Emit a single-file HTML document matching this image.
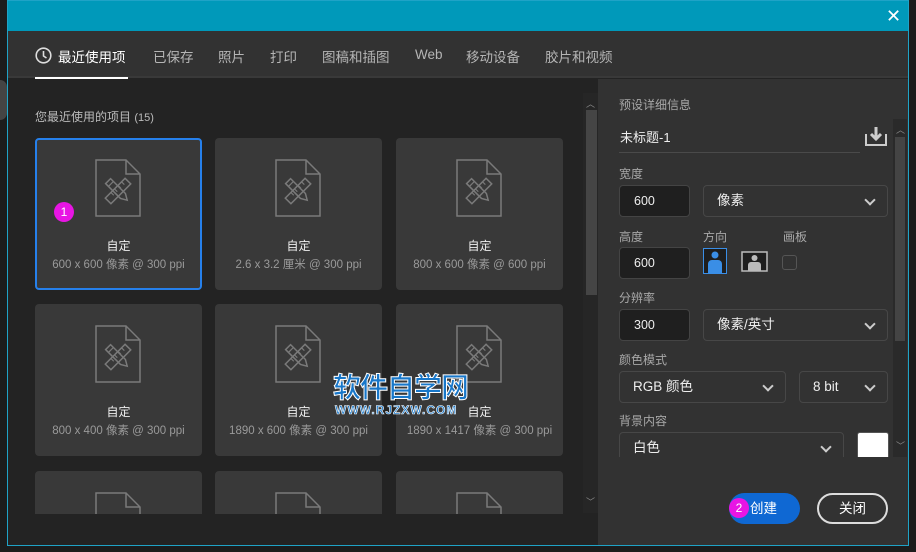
<!DOCTYPE html>
<html><head><meta charset="utf-8"><style>
*{margin:0;padding:0;box-sizing:border-box}
html,body{width:916px;height:552px;overflow:hidden}
body{background:#1c1c1c;position:relative;font-family:"Liberation Sans","Noto Sans CJK SC",sans-serif;color:#ddd}
.a{position:absolute}
.dlg{left:7px;top:0;width:902px;height:546px;border:1px solid #1fa3c7;background:#232323;overflow:hidden}
.card{position:absolute;width:167px;height:152px;background:#393939;border-radius:4px;text-align:center}
.card svg{position:absolute;left:60px;top:21px}
.card .t{position:absolute;top:99px;width:100%;font-size:12px;color:#eee}
.card .s{position:absolute;top:118px;width:100%;font-size:11.5px;color:#9a9a9a}
.lbl{position:absolute;font-size:12px;color:#a8a8a8}
.inp{position:absolute;background:#1f1f1f;border:1px solid #444;border-radius:4px;font-size:12.5px;color:#eee;padding-left:14px;line-height:30px;height:32px}
.dd{position:absolute;border:1px solid #474747;border-radius:4px;font-size:13.5px;color:#eee;padding-left:13px;line-height:30px;height:32px}
.dd:after{content:"";position:absolute;right:13px;top:10px;width:6px;height:6px;border-right:2px solid #ccc;border-bottom:2px solid #ccc;transform:rotate(45deg)}
.tab{position:absolute;top:45px;font-size:13.5px;color:#b5b5b5}
</style></head><body>
<svg width="0" height="0" style="position:absolute"><defs>
<g id="doc"><path d="M1 1h30l14 14v42H1z M31 1v14h14" fill="none" stroke="#7a7a7a" stroke-width="1.5"/></g>
<g id="tool"><g transform="rotate(45 23 32)"><rect x="19" y="18" width="8" height="28" fill="none" stroke="#7a7a7a" stroke-width="1.5"/><path d="M19 23h4M19 28h4M19 33h4M19 38h4" stroke="#7a7a7a" stroke-width="1.2"/></g><g transform="rotate(-45 23 32)"><path d="M19.5 18h7v21l-3.5 6-3.5-6z" fill="none" stroke="#7a7a7a" stroke-width="1.5"/><path d="M19.5 22h7" stroke="#7a7a7a" stroke-width="1.2"/></g></g>
</defs></svg>
<div class="a" style="left:0;top:80px;width:7px;height:40px;background:#444;border-radius:0 20px 20px 0"></div>
<div class="a dlg">
 <div class="a" style="left:0;top:0;width:900px;height:30px;background:#0099ba"></div>
 <div class="a" style="left:878px;top:6px;font-size:18px;color:#fff;line-height:18px">✕</div>
 <div class="a" style="left:0;top:30px;width:900px;height:47px;background:#323232;border-bottom:2px solid #393939"></div>
 <div class="a" style="left:27px;top:76px;width:93px;height:2px;background:#fff"></div>
 <svg class="a" style="left:27px;top:46px" width="17" height="17" viewBox="0 0 17 17"><circle cx="8.5" cy="8.5" r="7.3" fill="none" stroke="#ddd" stroke-width="1.6"/><path d="M8.5 4v5l3 2" fill="none" stroke="#ddd" stroke-width="1.6"/></svg>
 <div class="tab" style="left:50px;color:#fff">最近使用项</div>
 <div class="tab" style="left:145px">已保存</div>
 <div class="tab" style="left:210px">照片</div>
 <div class="tab" style="left:262px">打印</div>
 <div class="tab" style="left:314px">图稿和插图</div>
 <div class="tab" style="left:407px;top:46px">Web</div>
 <div class="tab" style="left:458px">移动设备</div>
 <div class="tab" style="left:537px">胶片和视频</div>
 <div class="lbl" style="left:27px;top:107px;color:#bbb">您最近使用的项目 <span style="font-size:11px">(15)</span></div>
 <div class="a" style="left:0;top:78px;width:575px;height:435px;overflow:hidden">
  <div class="card" style="left:27px;top:59px;border:2px solid #2680eb"><svg width="46" height="58" viewBox="0 0 46 58" style="left:58px;top:19px"><use href="#doc"/><use href="#tool"/></svg><div class="a" style="left:17px;top:62px;width:20px;height:20px;border-radius:50%;background:#e815e4;color:#fff;font-size:12px;line-height:20px">1</div><div class="t" style="top:97px">自定</div><div class="s" style="top:116px">600 x 600 像素 @ 300 ppi</div></div>
  <div class="card" style="left:207px;top:59px"><svg width="46" height="58" viewBox="0 0 46 58"><use href="#doc"/><use href="#tool"/></svg><div class="t">自定</div><div class="s">2.6 x 3.2 厘米 @ 300 ppi</div></div>
  <div class="card" style="left:388px;top:59px"><svg width="46" height="58" viewBox="0 0 46 58"><use href="#doc"/><use href="#tool"/></svg><div class="t">自定</div><div class="s">800 x 600 像素 @ 600 ppi</div></div>
  <div class="card" style="left:27px;top:225px"><svg width="46" height="58" viewBox="0 0 46 58"><use href="#doc"/><use href="#tool"/></svg><div class="t">自定</div><div class="s">800 x 400 像素 @ 300 ppi</div></div>
  <div class="card" style="left:207px;top:225px"><svg width="46" height="58" viewBox="0 0 46 58"><use href="#doc"/><use href="#tool"/></svg><div class="t">自定</div><div class="s">1890 x 600 像素 @ 300 ppi</div></div>
  <div class="card" style="left:388px;top:225px"><svg width="46" height="58" viewBox="0 0 46 58"><use href="#doc"/><use href="#tool"/></svg><div class="t">自定</div><div class="s">1890 x 1417 像素 @ 300 ppi</div></div>
  <div class="card" style="left:27px;top:392px"><svg width="46" height="58" viewBox="0 0 46 58"><use href="#doc"/></svg></div>
  <div class="card" style="left:207px;top:392px"><svg width="46" height="58" viewBox="0 0 46 58"><use href="#doc"/></svg></div>
  <div class="card" style="left:388px;top:392px"><svg width="46" height="58" viewBox="0 0 46 58"><use href="#doc"/></svg></div>
 </div>
 <div class="a" style="left:575px;top:92px;width:15px;height:420px;background:#262626"></div>
 <div class="a" style="left:578px;top:96px;font-size:9px;color:#888">︿</div>
 <div class="a" style="left:578px;top:109px;width:11px;height:185px;background:#454545"></div>
 <div class="a" style="left:578px;top:494px;font-size:9px;color:#888">﹀</div>
 <div class="a" style="left:325px;top:370px;font-size:28px;font-weight:bold;color:#1877c9;-webkit-text-stroke:1px #fff;letter-spacing:-1px;font-family:'Noto Sans CJK SC',sans-serif;line-height:30px">软件自学网</div>
 <div class="a" style="left:327px;top:402px;font-size:12px;font-weight:bold;color:#1877c9;-webkit-text-stroke:0.6px #fff;letter-spacing:1px">WWW.RJZXW.COM</div>
 <div class="a" style="left:590px;top:78px;width:310px;height:467px;background:#323232"></div>
 <div class="a" style="left:590px;top:78px;width:310px;height:378px;overflow:hidden">
  <div class="lbl" style="left:21px;top:17px">预设详细信息</div>
  <div class="a" style="left:22px;top:48px;font-size:13px;color:#eee">未标题-1</div>
  <div class="a" style="left:21px;top:73px;width:241px;height:1px;background:#4a4a4a"></div>
  <svg class="a" style="left:267px;top:47px" width="22" height="20" viewBox="0 0 22 20"><path d="M1 8v11h20V8" fill="none" stroke="#ccc" stroke-width="2"/><path d="M11 1v11M6 8l5 5 5-5" fill="none" stroke="#ccc" stroke-width="3"/></svg>
  <div class="lbl" style="left:21px;top:86px">宽度</div>
  <div class="inp" style="left:21px;top:106px;width:71px">600</div>
  <div class="dd" style="left:105px;top:106px;width:185px">像素</div>
  <div class="lbl" style="left:21px;top:149px">高度</div>
  <div class="lbl" style="left:105px;top:149px">方向</div>
  <div class="lbl" style="left:185px;top:149px">画板</div>
  <div class="inp" style="left:21px;top:168px;width:71px">600</div>
  <svg class="a" style="left:105px;top:169px" width="24" height="26" viewBox="0 0 24 26"><rect x="0.5" y="0.5" width="23" height="25" fill="#1e1e1e" stroke="#3a8ee6"/><circle cx="12" cy="7" r="3.5" fill="#3a8ee6"/><path d="M5 25v-9a4 4 0 0 1 4-4h6a4 4 0 0 1 4 4v9z" fill="#3a8ee6"/></svg>
  <svg class="a" style="left:143px;top:172px" width="27" height="21" viewBox="0 0 27 21"><rect x="1" y="1" width="25" height="19" fill="#1e1e1e" stroke="#bbb" stroke-width="1.5"/><circle cx="13.5" cy="7" r="3" fill="#bbb"/><path d="M7 20v-6a3 3 0 0 1 3-3h7a3 3 0 0 1 3 3v6z" fill="#bbb"/></svg>
  <div class="a" style="left:184px;top:176px;width:15px;height:15px;border:1.5px solid #555;border-radius:3px"></div>
  <div class="lbl" style="left:21px;top:210px">分辨率</div>
  <div class="inp" style="left:21px;top:230px;width:71px">300</div>
  <div class="dd" style="left:105px;top:230px;width:185px">像素/英寸</div>
  <div class="lbl" style="left:21px;top:272px">颜色模式</div>
  <div class="dd" style="left:21px;top:292px;width:167px">RGB 颜色</div>
  <div class="dd" style="left:201px;top:292px;width:89px">8 bit</div>
  <div class="lbl" style="left:21px;top:333px">背景内容</div>
  <div class="dd" style="left:21px;top:353px;width:225px">白色</div>
  <div class="a" style="left:259px;top:353px;width:32px;height:32px;background:#fff;border:1px solid #555;border-radius:3px"></div>
 </div>
 <div class="a" style="left:885px;top:118px;width:14px;height:338px;background:#2a2a2a"></div>
 <div class="a" style="left:887px;top:136px;width:10px;height:204px;background:#444"></div>
 <div class="a" style="left:888px;top:122px;font-size:9px;color:#888">︿</div>
 <div class="a" style="left:888px;top:438px;font-size:9px;color:#888">﹀</div>
 <div class="a" style="left:721px;top:492px;width:71px;height:31px;border-radius:16px;background:#0f68d3;color:#fff;font-size:13.5px;line-height:31px;padding-left:21px">创建</div>
 <div class="a" style="left:721px;top:497px;width:20px;height:20px;border-radius:50%;background:#e815e4;color:#fff;font-size:12px;line-height:20px;text-align:center">2</div>
 <div class="a" style="left:809px;top:492px;width:71px;height:31px;border-radius:16px;border:2px solid #ddd;color:#fff;font-size:13.5px;line-height:27px;text-align:center">关闭</div>
</div>
</body></html>
